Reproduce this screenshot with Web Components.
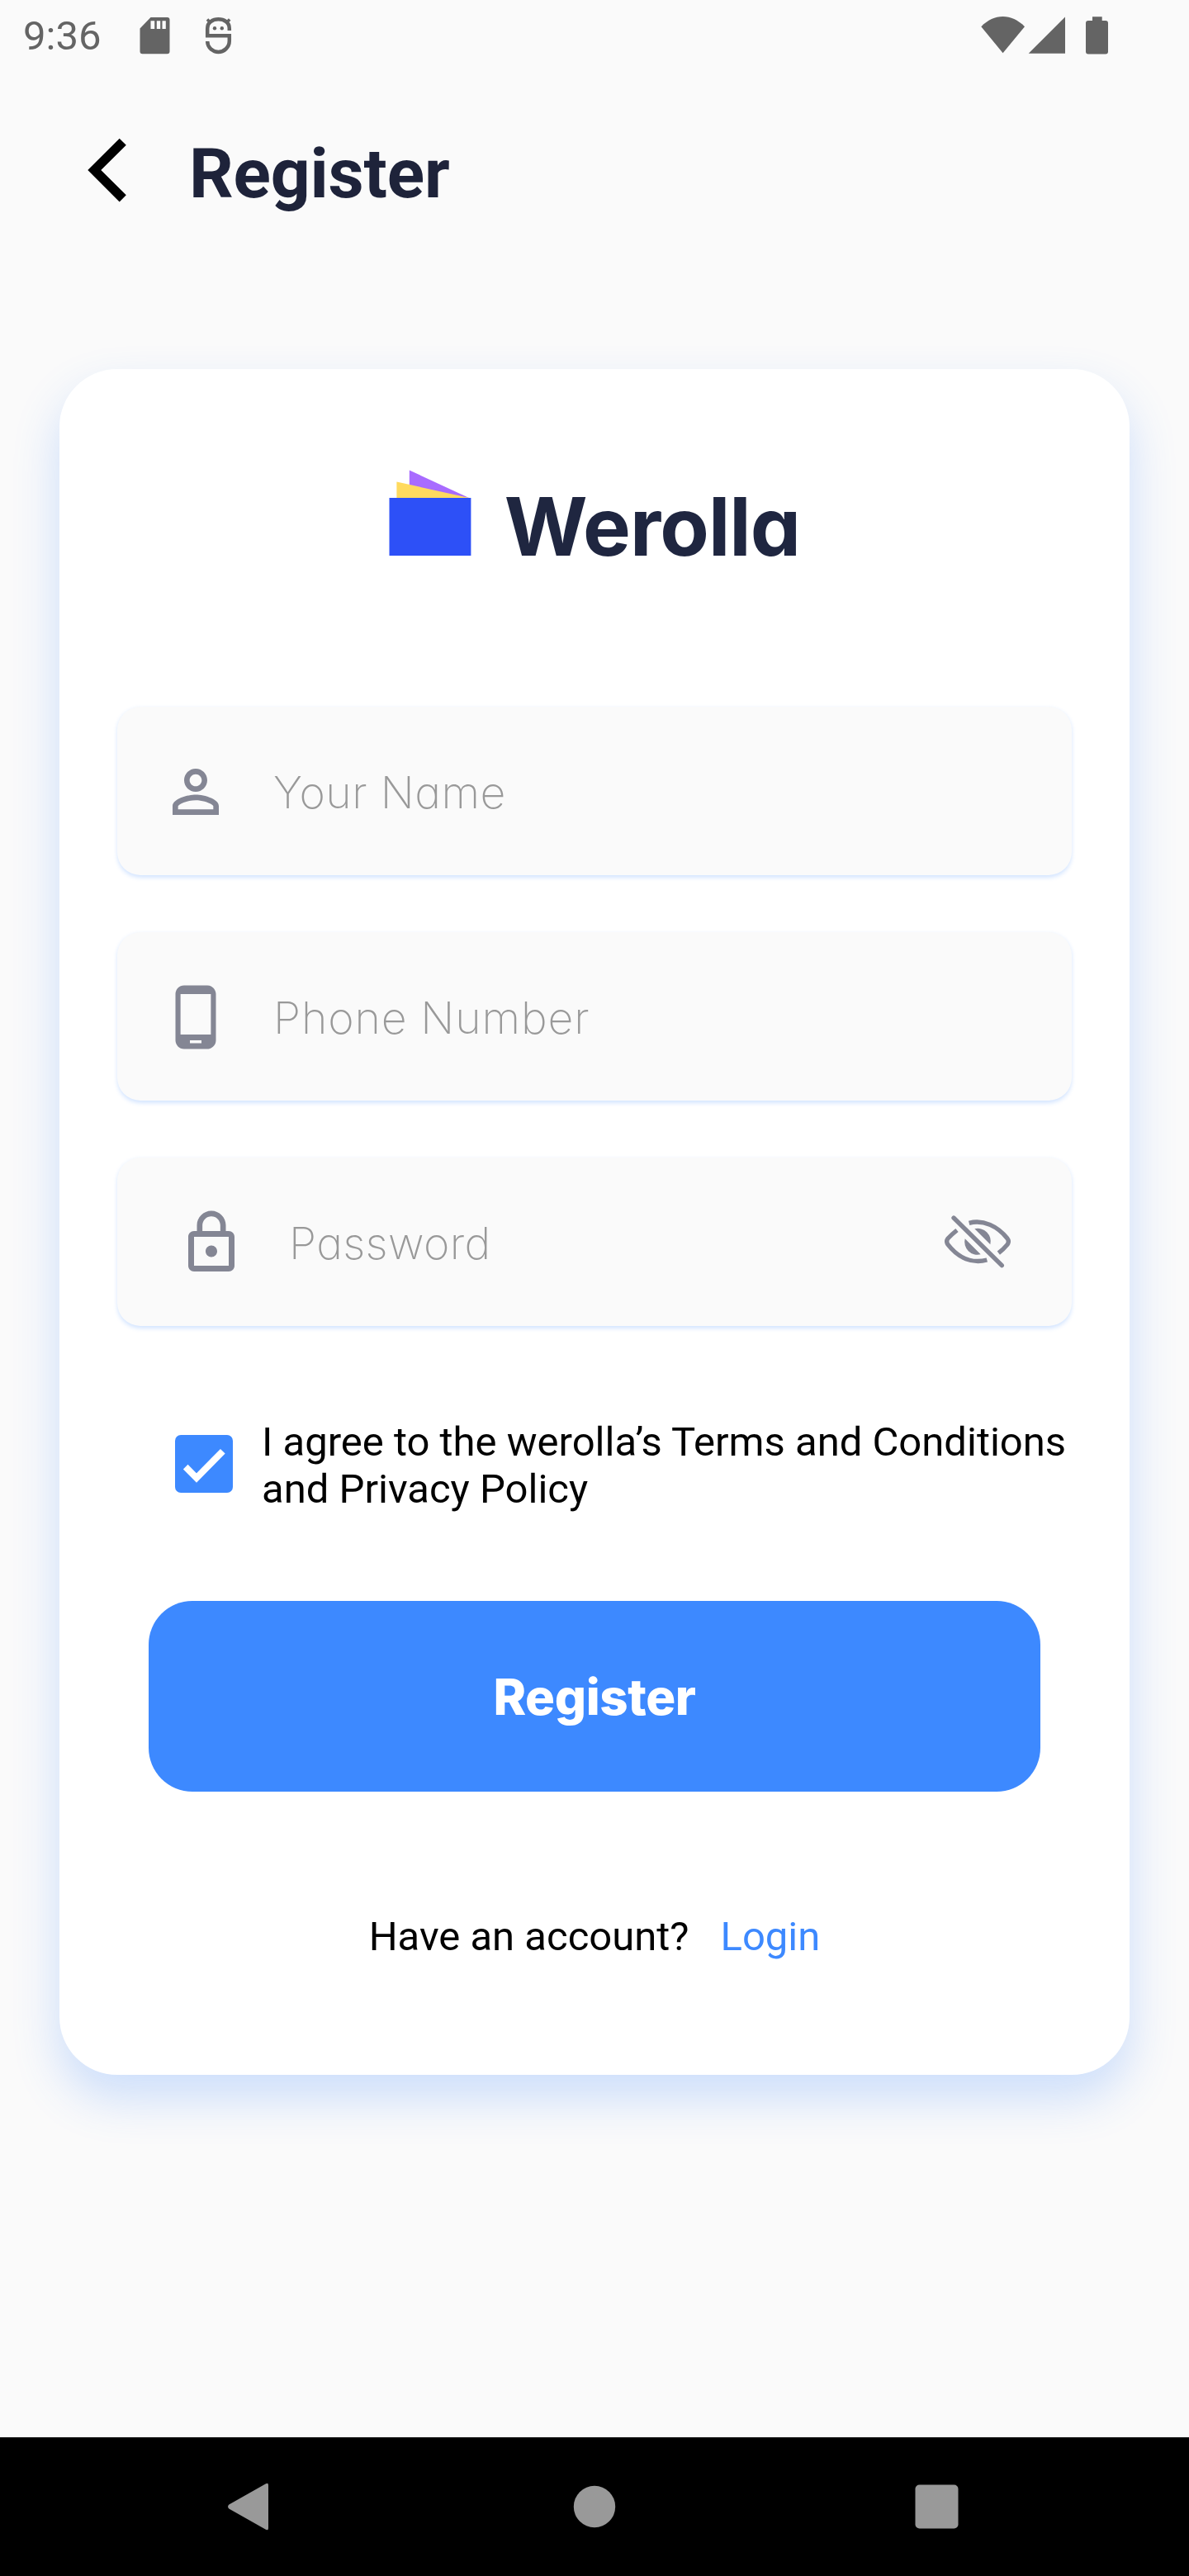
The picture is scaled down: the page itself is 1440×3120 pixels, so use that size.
<!DOCTYPE html>
<html lang="en">
<head>
<meta charset="utf-8">
<title>Register</title>
<style>
body{margin:0;background:#fafafa;font-family:Roboto,sans-serif}
</style>
</head>
<body>
<register-screen></register-screen>
<script>
const define = (name, html) => {
  const template = document.createElement('template');
  template.innerHTML = html;
  customElements.define(name, class extends HTMLElement {
    constructor() {
      super();
      this.attachShadow({ mode: 'open' }).append(template.content.cloneNode(true));
    }
  });
};

define('status-bar', `
<style>
:host{display:flex;height:84px;padding:2px 97px 0 28px;box-sizing:border-box;justify-content:space-between;align-items:center;color:#646464}
.left,.right{display:flex;align-items:center}
time{font-size:49px;line-height:58px;display:block;width:95px;margin-right:46px;padding-top:2px}
svg{display:block;fill:currentColor}
</style>
<div class="left">
  <time>9:36</time>
  <svg width="37" height="46" viewBox="169 19 37 46"><path fill-rule="evenodd" d="M182.500 20H202.500a3 3 0 0 1 3 3V61.300a3 3 0 0 1-3 3H172.500a3 3 0 0 1-3-3V33.500ZM182.500 24.300V34h4.700V24.300ZM189.800 24.300V34h4.400V24.300ZM196.500 24.300V34h4.300V24.300Z"/></svg>
  <svg style="margin-left:42px" width="34" height="46" viewBox="248 19 34 46">
    <path fill="none" stroke="currentColor" stroke-width="4.500" d="M277.800 36V33.500C277.800 26 271.500 22.300 264.500 22.300S251.200 26 251.200 33.500V42.200H277.800V48.500C277.800 56.500 271 62 264.500 62S251.200 56.500 251.200 49"/>
    <path fill="none" stroke="currentColor" stroke-width="3.600" d="m251 22.600 4 4M278.200 22.600l-4 4"/>
    <circle cx="260" cy="33.200" r="2.200"/><circle cx="268.800" cy="33.200" r="2.200"/>
  </svg>
</div>
<div class="right">
  <svg width="155" height="46" viewBox="1188 19 155 46">
    <path d="M1188.300 31.300C1204 15 1225 15 1241 31.300L1214.600 63.200Z"/>
    <path d="M1290 19.500V63.700H1245.700Z"/>
    <path d="M1323 19.200h11.700V24H1339a3 3 0 0 1 3 3V61.500a3 3 0 0 1-3 3h-21a3 3 0 0 1-3-3V27a3 3 0 0 1 3-3h5Z"/>
  </svg>
</div>`);

define('app-header', `
<style>
:host{display:flex;height:244px;align-items:center;padding-left:106px;box-sizing:border-box}
svg{display:block;margin-right:76px}
h1{margin:0;padding-top:9px;font:700 84px/98px Roboto,sans-serif;letter-spacing:-.200px;color:#1e233a}
</style>
<svg width="47" height="78" viewBox="0 0 47 78"><path d="M38.700.700 46.800 8.700 16.300 39 46.800 69.300 38.700 77.500.300 39Z"/></svg>
<h1><slot></slot></h1>`);

define('brand-logo', `
<style>
:host{display:flex;align-items:flex-start;height:160px;padding-right:1px}
svg{display:block}
span{display:block;margin-top:18px;font:650 97.200px/120px Inter,sans-serif;letter-spacing:-.900px;font-feature-settings:"cv11";color:#1f2640;white-space:nowrap}
</style>
<svg width="141" height="120" viewBox="471 560 141 120">
  <path fill="#a86bff" d="M496.800 569.500V592L569 603Z"/>
  <path fill="#ffda5e" d="M481.400 583.500 569 603H481.400Z"/>
  <path fill="#2d50f7" d="M472.500 603H571.400V673H472.500Z"/>
</svg>
<span><slot></slot></span>`);

define('input-field', `
<style>
:host{display:flex;align-items:center;height:204px;box-sizing:border-box;border-radius:28px;background:#fafafa;box-shadow:0 2.500px 5px rgba(61,137,255,.22);padding:0 74px 0 53px}
.lead{padding:1px 52px 0 0}
.lead,::slotted(svg){display:block;fill:#848694;color:#848694}
.label{flex:1;padding-top:3px;font:210 53.600px/65px Inter,sans-serif;font-feature-settings:"cv11";color:#999;white-space:nowrap}
</style>
<div class="lead"><slot name="icon"></slot></div>
<div class="label"><slot></slot></div>
<slot name="action"></slot>`);

define('agree-row', `
<style>
:host{display:flex;align-items:center;gap:35px}
svg{display:block;margin-bottom:2px}
p{margin:0;padding-top:2px;font-size:49px;line-height:57px;color:#000;white-space:nowrap}
</style>
<svg width="70" height="70" viewBox="0 0 70 70"><rect width="70" height="70" rx="7" fill="#3d89ff"/><path d="M12.700 38.700 26 52 57.800 19.700" fill="none" stroke="#fff" stroke-width="8"/></svg>
<p><slot></slot></p>`);

define('primary-button', `
<style>
:host{display:block}
button{all:unset;display:flex;align-items:center;justify-content:center;width:1080px;height:231px;border-radius:53px;background:#3d89ff;color:#fff;font:800 60px/72px Inter,sans-serif;letter-spacing:-.400px}
</style>
<button><slot></slot></button>`);

define('login-hint', `
<style>
:host{display:flex;gap:38px;font-size:49px;line-height:57px;color:#000}
::slotted(a){color:#3d89ff;text-decoration:none}
</style>
<slot></slot><slot name="link"></slot>`);

define('form-card', `
<style>
:host{display:flex;flex-direction:column;align-items:center;width:1296px;height:2066px;box-sizing:border-box;padding-top:113px;border-radius:70px;background:#fff;box-shadow:0 28px 56px rgba(61,137,255,.245)}
</style>
<slot></slot>`);

define('nav-bar', `
<style>
:host{display:flex;height:168px;background:#000;align-items:center;justify-content:space-between;padding:0 279px 0 275px;box-sizing:border-box}
svg{display:block;fill:#999}
.home{margin-left:6px}
</style>
<svg width="51" height="58" viewBox="275 3007 51 58"><path d="M321.500 3008.500Q325 3006.500 325 3010V3062Q325 3065.500 321.500 3063.500L277.300 3038.500Q274.800 3036 277.300 3033.500Z"/></svg>
<svg class="home" width="52" height="52" viewBox="0 0 52 52"><circle cx="26" cy="26" r="25.200"/></svg>
<svg width="53" height="54" viewBox="0 0 53 54"><rect x=".500" y=".500" width="52" height="53" rx="5"/></svg>`);

define('register-screen', `
<style>
:host{display:flex;flex-direction:column;width:1440px;height:3120px;background:#fafafa}
main{flex:1;display:flex;flex-direction:column;align-items:center;padding-top:119px}
.fields{display:flex;flex-direction:column;gap:69px;width:1156px;margin-top:136px}
.secure{padding-left:72px}
agree-row{align-self:flex-start;margin:110px 0 0 140px}
primary-button{margin-top:107px}
login-hint{margin-top:147px}
</style>
<status-bar></status-bar>
<app-header>Register</app-header>
<main>
  <form-card>
    <brand-logo>Werolla</brand-logo>
    <div class="fields">
      <input-field style="letter-spacing:.500px">
        <svg slot="icon" width="84" height="84" viewBox="0 0 24 24"><path d="M12 5.900c1.160 0 2.100.940 2.100 2.100s-.940 2.100-2.100 2.100S9.900 9.160 9.900 8s.940-2.100 2.100-2.100m0 9c2.970 0 6.100 1.460 6.100 2.100v1.100H5.900V17c0-.640 3.130-2.100 6.100-2.100M12 4C9.790 4 8 5.790 8 8s1.790 4 4 4 4-1.790 4-4-1.790-4-4-4zm0 9c-2.670 0-8 1.340-8 4v3h16v-3c0-2.660-5.330-4-8-4z"/></svg>
        Your Name
      </input-field>
      <input-field style="letter-spacing:.850px">
        <svg slot="icon" width="84" height="84" viewBox="0 0 24 24"><path d="M16 1H8C6.340 1 5 2.340 5 4v16c0 1.660 1.340 3 3 3h8c1.660 0 3-1.340 3-3V4c0-1.660-1.340-3-3-3zm-2 20h-4v-1h4v1zm3.250-3H6.750V4h10.500v14z"/></svg>
        Phone Number
      </input-field>
      <input-field class="secure" style="letter-spacing:.350px">
        <svg slot="icon" width="84" height="84" viewBox="0 0 24 24"><path d="M12 17c1.100 0 2-.900 2-2s-.900-2-2-2-2 .900-2 2 .900 2 2 2zm6-9h-1V6c0-2.760-2.240-5-5-5S7 3.240 7 6v2H6c-1.100 0-2 .900-2 2v10c0 1.100.900 2 2 2h12c1.100 0 2-.900 2-2V10c0-1.100-.900-2-2-2zM8.900 6c0-1.710 1.390-3.100 3.100-3.100s3.100 1.390 3.100 3.100v2H8.900V6zM18 20H6V10h12v10z"/></svg>
        Password
        <svg slot="action" width="80" height="64" viewBox="192 278 240 192">
          <g fill="none" stroke="#848694" stroke-width="16">
            <path d="M281 306C333 292 385 318 420 362Q428 373 420 384Q406 401 388 415"/>
            <path d="M237 332Q218 347 204 362Q196 373 204 384C243 434 293 454 346 440"/>
            <path d="M225 287 400 460" stroke-linecap="round"/>
          </g>
          <path d="M301 327A47 47 0 0 1 358 384ZM266 363A47 47 0 0 0 323 420Z"/>
        </svg>
      </input-field>
    </div>
    <agree-row>I agree to the werolla’s Terms and Conditions<br>and Privacy Policy</agree-row>
    <primary-button>Register</primary-button>
    <login-hint>Have an account?<a slot="link">Login</a></login-hint>
  </form-card>
</main>
<nav-bar></nav-bar>`);
</script>
</body>
</html>
